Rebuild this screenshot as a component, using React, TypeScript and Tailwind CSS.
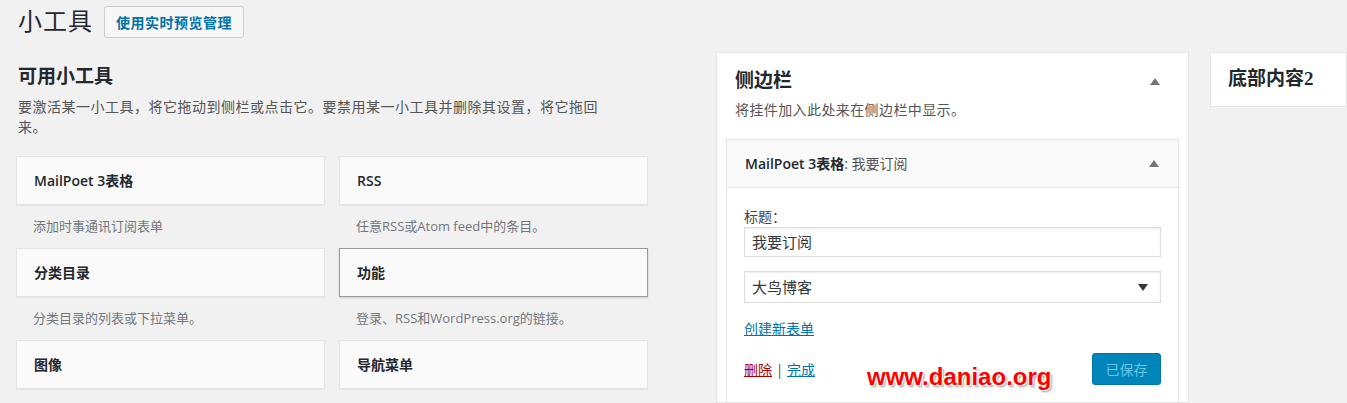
import React from 'react';

const sans = { fontFamily: '"Open Sans", "Noto Sans CJK SC", sans-serif' };

const widgets = [
    { title: 'MailPoet 3表格', desc: '添加时事通讯订阅表单' },
    { title: 'RSS', desc: '任意RSS或Atom feed中的条目。' },
    { title: '分类目录', desc: '分类目录的列表或下拉菜单。' },
    { title: '功能', desc: '登录、RSS和WordPress.org的链接。', active: true },
    { title: '图像', desc: '' },
    { title: '导航菜单', desc: '' },
];

function Caret({ down = false }: { down?: boolean }) {
    return (
        <svg width="10" height="7" viewBox="0 0 10 7" className={down ? 'rotate-180' : ''}>
            <polygon points="5,0 10,7 0,7" fill={down ? '#32373c' : '#72777c'} />
        </svg>
    );
}

function WidgetCard({ title, desc, active }: { title: string; desc: string; active?: boolean }) {
    return (
        <div>
            <div
                className={
                    'h-[49px] flex items-center pl-[17px] bg-[#fafafa] text-[14px] font-semibold text-[#23282d] border ' +
                    (active ? 'border-[#999] shadow-[0_1px_2px_rgba(0,0,0,0.15)]' : 'border-[#e5e5e5] shadow-[0_1px_1px_rgba(0,0,0,0.04)]')
                }
            >
                {title}
            </div>
            {desc && (
                <div className="h-[43px] flex items-center pl-[17px] text-[13px] text-[#72777c]">{desc}</div>
            )}
        </div>
    );
}

export default function App() {
    return (
        <main className="h-screen bg-[#f1f1f1] text-[#444] relative overflow-hidden" style={sans}>
            <div className="flex items-center gap-[11px] pl-[18px] pt-[6px]">
                <h1 className="text-[24px] tracking-[1px] leading-[32px] text-[#23282d] font-['Liberation_Serif','Noto_Sans_CJK_SC',serif]">小工具</h1>
                <button className="h-[32px] px-[11px] border border-[#ccc] bg-[#f7f7f7] rounded-[3px] text-[14px] tracking-[0.5px] font-bold text-[#0073aa]">
                    使用实时预览管理
                </button>
            </div>

            <div className="flex mt-[14px]">
                {/* available widgets */}
                <div className="w-[716px] shrink-0 pl-[16px] pt-[13px]">
                    <h2 className="pl-[2px] text-[19px] leading-[24px] font-bold text-[#23282d] font-['Liberation_Serif','Noto_Sans_CJK_SC',serif]">可用小工具</h2>
                    <p className="pl-[2px] mt-[8px] max-w-[592px] text-[14px] tracking-[0.5px] leading-[20px] text-[#555]">
                        要激活某一小工具，将它拖动到侧栏或点击它。要禁用某一小工具并删除其设置，将它拖回来。
                    </p>
                    <div className="mt-[19px] grid grid-cols-[309px_309px] gap-x-[14px]">
                        {widgets.map((w) => (
                            <WidgetCard key={w.title} {...w} />
                        ))}
                    </div>
                </div>

                {/* sidebar */}
                <div className="w-[473px] shrink-0 bg-white border border-[#e5e5e5] h-[351px] overflow-hidden">
                    <div className="flex items-center justify-between pt-[17px] pl-[18px] pr-[28px]">
                        <h3 className="text-[19px] leading-[22px] font-bold text-[#23282d] font-['Liberation_Serif','Noto_Sans_CJK_SC',serif]">侧边栏</h3>
                        <Caret />
                    </div>
                    <p className="mt-[8px] pl-[18px] text-[14px] leading-[20px] text-[#555] tracking-[0.4px]">将挂件加入此处来在侧边栏中显示。</p>

                    <div className="mt-[19px] mx-[9px] border border-[#e5e5e5] bg-white">
                        <div className="h-[48px] flex items-center justify-between pl-[18px] pr-[19px] bg-[#fafafa] border-b border-[#e5e5e5]">
                            <span className="text-[14px] font-semibold text-[#23282d]">
                                MailPoet 3表格<span className="font-normal text-[#555]">: 我要订阅</span>
                            </span>
                            <Caret />
                        </div>
                        <div className="px-[17px] pt-[19px] pb-[20px]">
                            <div className="text-[14px] leading-[20px] text-[#444]">标题：</div>
                            <div className="h-[30px] border border-[#ddd] shadow-[inset_0_1px_2px_rgba(0,0,0,0.07)] flex items-center px-[7px] text-[15px] text-[#32373c]">
                                我要订阅
                            </div>
                            <div className="mt-[14px] h-[32px] border border-[#ddd] shadow-[inset_0_1px_2px_rgba(0,0,0,0.07)] flex items-center justify-between pl-[7px] pr-[12px] text-[15px] text-[#32373c]">
                                <span>大鸟博客</span>
                                <Caret down />
                            </div>
                            <div className="mt-[16px] text-[14px] leading-[20px]">
                                <a className="text-[#0073aa] underline">创建新表单</a>
                            </div>
                            <div className="mt-[14px] flex items-center justify-between">
                                <div className="text-[14px] text-[#555]">
                                    <a className="text-[#a00] underline">删除</a> | <a className="text-[#0073aa] underline">完成</a>
                                </div>
                                <button className="h-[32px] w-[69px] rounded-[3px] bg-[#0085ba] border border-[#0073aa] text-[14px] text-[#66c6e4]">
                                    已保存
                                </button>
                            </div>
                        </div>
                    </div>
                </div>

                {/* footer area */}
                <div className="ml-[21px] flex-1">
                    <div className="h-[55px] bg-white border border-[#e5e5e5] flex items-center pl-[17px]">
                        <h3 className="text-[19px] font-bold text-[#23282d] font-['Liberation_Serif','Noto_Sans_CJK_SC',serif]">底部内容2</h3>
                    </div>
                </div>
            </div>

            {/* watermark */}
            <div className="absolute left-[867px] top-[359px] text-[24px] font-bold text-[#ff0000] font-['Liberation_Sans',sans-serif] [text-shadow:1px_1px_0_#fff,-1px_-1px_0_#fff,1px_-1px_0_#fff,-1px_1px_0_#fff,2px_2px_2px_#999]">
                www.daniao.org
            </div>
        </main>
    );
}
